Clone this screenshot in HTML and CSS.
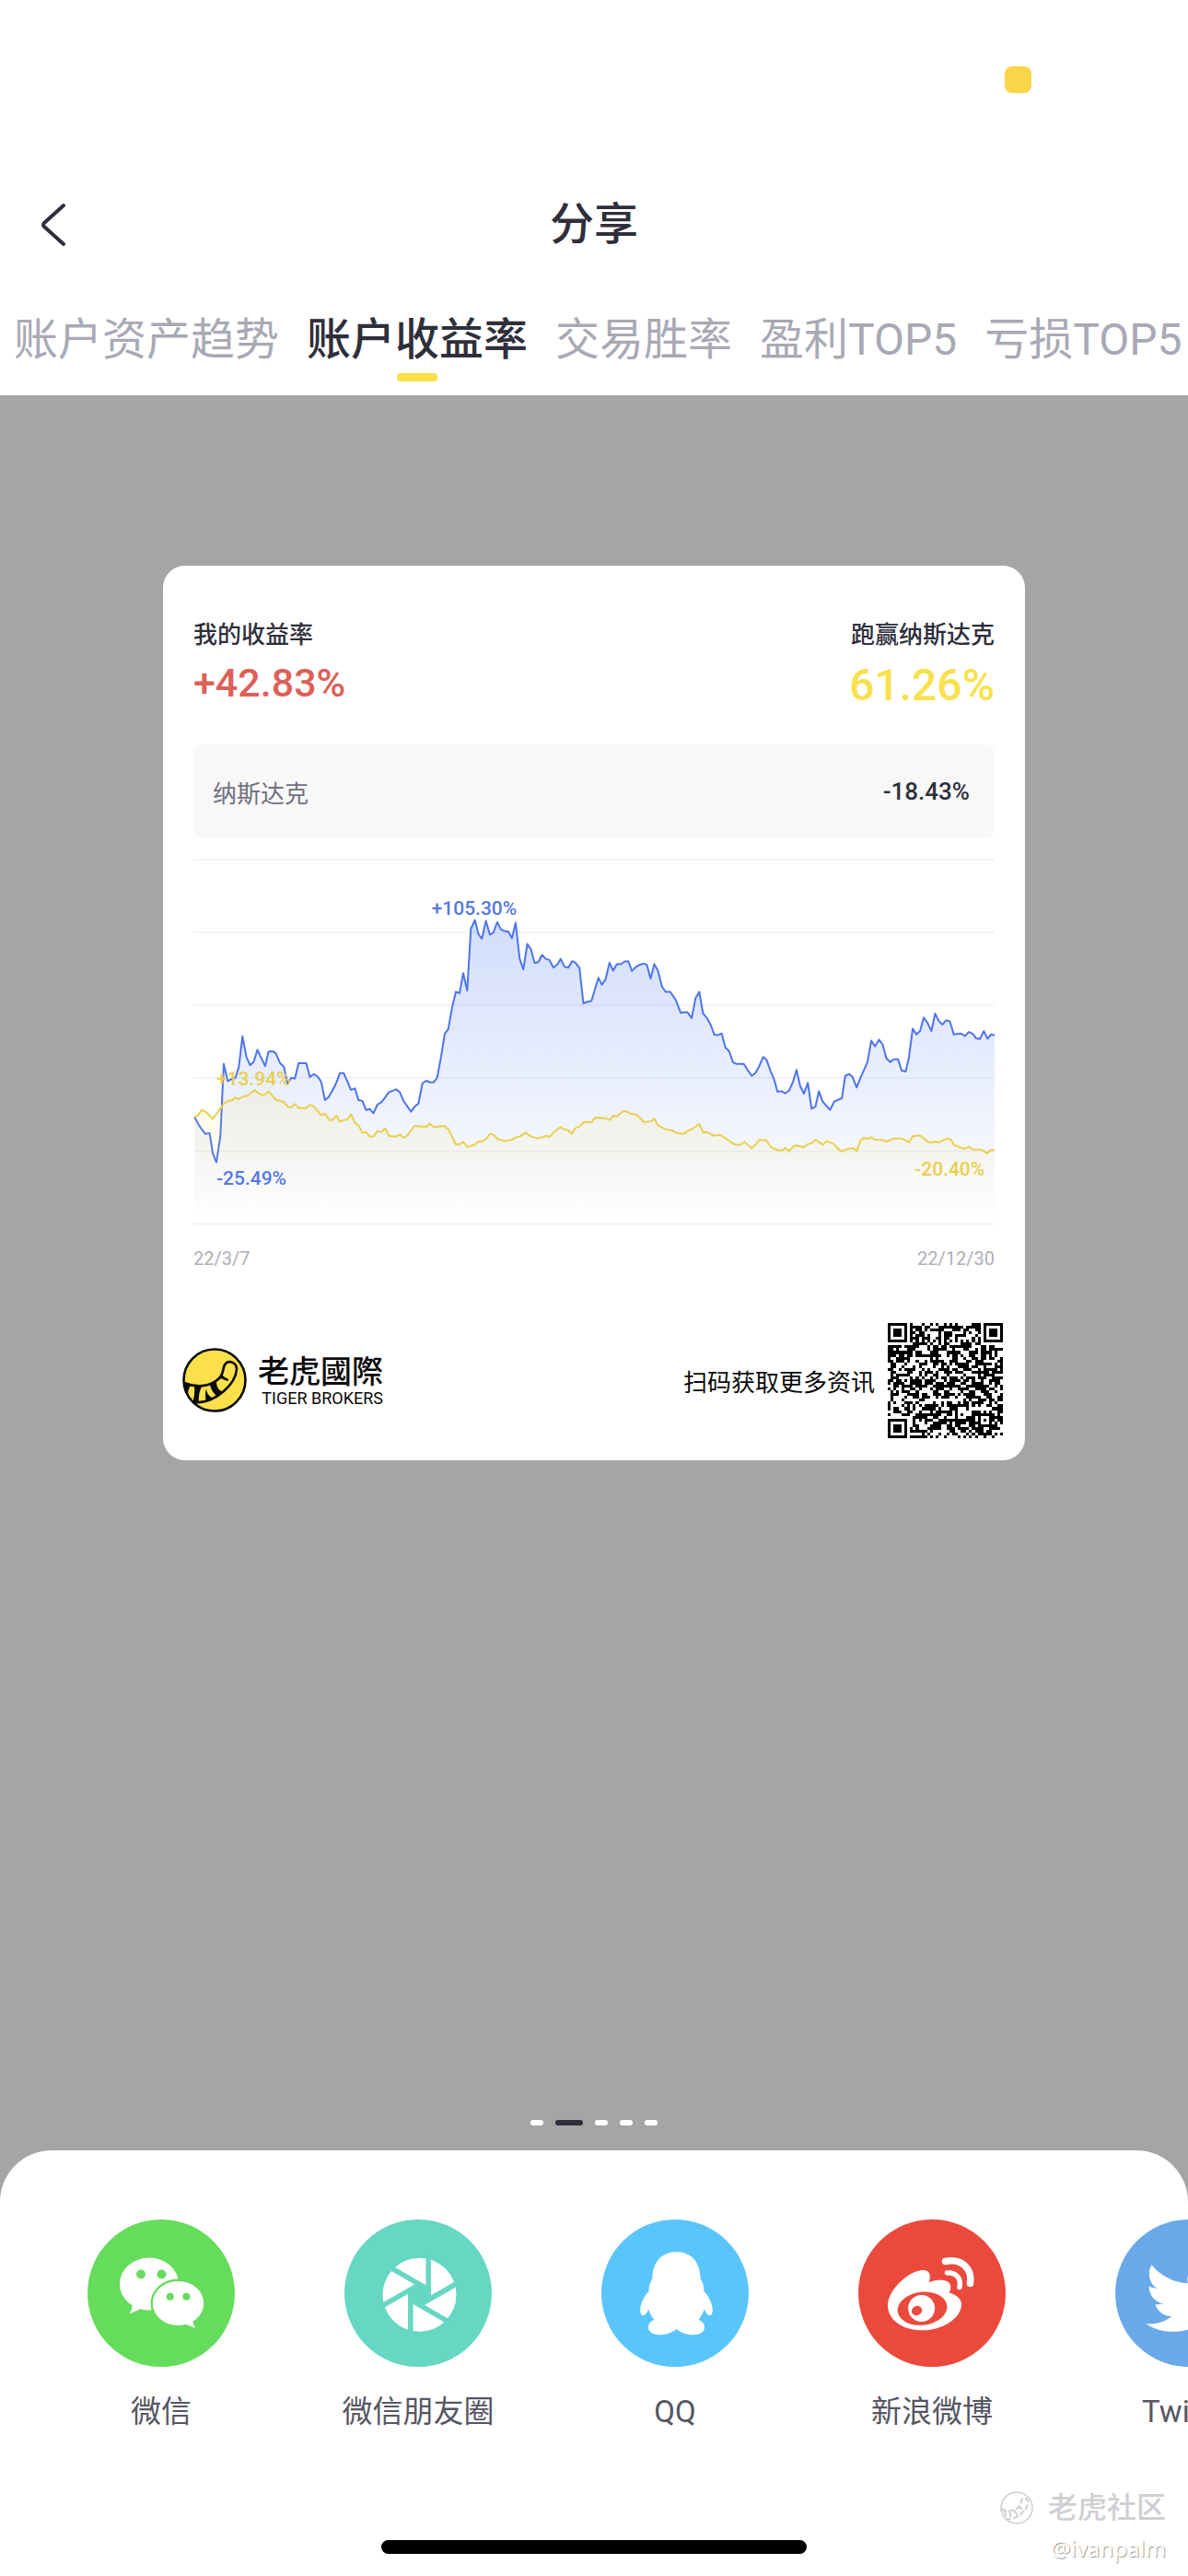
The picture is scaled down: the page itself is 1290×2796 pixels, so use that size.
FILE: index.html
```html
<!DOCTYPE html>
<html lang="zh-CN">
<head>
<meta charset="utf-8">
<meta name="viewport" content="width=device-width, initial-scale=1">
<title>分享</title>
<link rel="stylesheet" href="styles.css">
</head>
<body>
<div class="page">
  <header class="header">
    <div class="status"><span class="status-dot"></span></div>
    <div class="titlebar">
      <button class="back" type="button" aria-label="返回">
        <svg width="30" height="48" viewBox="0 0 30 48"><path d="M26 3 5 22Q3 24 5 26L26 45" fill="none" stroke="#2f2f3b" stroke-width="4" stroke-linecap="round" stroke-linejoin="round"/></svg>
      </button>
      <h1 class="title">分享</h1>
    </div>
    <nav class="tabs">
      <a class="tab" href="#assets">账户资产趋势</a>
      <a class="tab tab-active" href="#returns" aria-current="page">账户收益率</a>
      <a class="tab" href="#winrate">交易胜率</a>
      <a class="tab" href="#profit">盈利TOP5</a>
      <a class="tab" href="#loss">亏损TOP5</a>
    </nav>
  </header>

  <main class="stage">
    <article class="card">
      <div class="summary">
        <div class="metric">
          <span class="metric-label">我的收益率</span>
          <strong class="metric-value gain">+42.83%</strong>
        </div>
        <div class="metric metric-right">
          <span class="metric-label">跑赢纳斯达克</span>
          <strong class="metric-value beat">61.26%</strong>
        </div>
      </div>
      <div class="benchmark">
        <span class="benchmark-name">纳斯达克</span>
        <span class="benchmark-value">-18.43%</span>
      </div>
      <figure class="chart">
        <svg class="plot" viewBox="0 0 871 400" role="img" aria-label="收益率走势">
          <defs>
            <linearGradient id="blueFill" gradientUnits="userSpaceOnUse" x1="0" y1="230" x2="0" y2="1220">
              <stop offset="0" stop-color="#4a76f0" stop-opacity=".25"/>
              <stop offset="1" stop-color="#4a76f0" stop-opacity="0"/>
            </linearGradient>
            <linearGradient id="goldFill" gradientUnits="userSpaceOnUse" x1="0" y1="790" x2="0" y2="1220">
              <stop offset="0" stop-color="#f3dc3e" stop-opacity=".12"/>
              <stop offset="1" stop-color="#f3dc3e" stop-opacity="0"/>
            </linearGradient>
          </defs>
          <g stroke="#f3f4f6" stroke-width="2">
            <path d="M0 3H871M0 82H871M0 161H871M0 240H871M0 320H871M0 399H871"/>
          </g>
          <g transform="scale(.33333) translate(-27 -30)" stroke-linejoin="round">
            <path fill="url(#blueFill)" d="M30 878 45 905 65 933 80 931 90 995 102 1026 115 940 126 705 139 761 152 754 164 751 175 716 187 615 200 683 212 709 223 700 236 659 248 685 261 712 272 665 286 664 296 671 309 702 322 714 334 770 346 750 358 753 370 703 395 703 407 748 420 738 433 747 444 764 456 823 468 813 480 793 492 769 505 735 517 735 529 762 541 790 554 785 565 823 578 826 590 855 602 852 614 866 627 838 640 830 652 815 664 798 688 788 700 797 713 827 737 861 748 845 761 834 774 768 786 760 799 765 811 765 822 750 835 680 847 606 858 592 871 520 883 470 895 475 907 409 920 466 932 265 945 236 957 283 968 297 981 239 994 284 1005 277 1018 243 1030 267 1042 272 1054 274 1066 295 1078 245 1091 362 1103 397 1116 314 1128 332 1140 376 1152 373 1164 350 1177 363 1188 366 1201 391 1213 382 1225 363 1237 388 1250 391 1262 370 1273 375 1286 392 1299 508 1310 503 1325 500 1348 424 1359 447 1371 430 1384 375 1396 401 1408 380 1421 380 1434 371 1446 371 1457 402 1468 391 1482 382 1496 378 1506 382 1518 427 1530 380 1542 401 1555 453 1567 470 1582 470 1601 498 1616 538 1638 536 1652 556 1665 490 1677 470 1689 540 1702 556 1714 578 1726 610 1738 611 1750 606 1762 652 1774 663 1787 700 1799 705 1822 705 1834 724 1848 744 1860 735 1873 711 1885 683 1896 691 1910 730 1921 756 1932 796 1945 794 1957 801 1970 792 1982 765 1994 725 2006 777 2018 802 2031 767 2043 851 2056 844 2067 794 2079 828 2091 841 2103 855 2117 828 2142 817 2153 744 2166 738 2177 748 2190 782 2203 750 2225 700 2238 629 2250 648 2263 626 2275 642 2287 687 2300 699 2311 690 2325 690 2337 727 2350 730 2360 688 2373 590 2385 609 2397 598 2409 554 2421 571 2434 598 2446 541 2458 565 2470 577 2482 563 2494 566 2507 609 2530 606 2543 614 2556 601 2569 607 2580 622 2592 624 2605 598 2617 623 2629 609 2640 612V1220H30Z"/>
            <path fill="none" stroke="#4d74ec" stroke-width="6" d="M30 878 45 905 65 933 80 931 90 995 102 1026 115 940 126 705 139 761 152 754 164 751 175 716 187 615 200 683 212 709 223 700 236 659 248 685 261 712 272 665 286 664 296 671 309 702 322 714 334 770 346 750 358 753 370 703 395 703 407 748 420 738 433 747 444 764 456 823 468 813 480 793 492 769 505 735 517 735 529 762 541 790 554 785 565 823 578 826 590 855 602 852 614 866 627 838 640 830 652 815 664 798 688 788 700 797 713 827 737 861 748 845 761 834 774 768 786 760 799 765 811 765 822 750 835 680 847 606 858 592 871 520 883 470 895 475 907 409 920 466 932 265 945 236 957 283 968 297 981 239 994 284 1005 277 1018 243 1030 267 1042 272 1054 274 1066 295 1078 245 1091 362 1103 397 1116 314 1128 332 1140 376 1152 373 1164 350 1177 363 1188 366 1201 391 1213 382 1225 363 1237 388 1250 391 1262 370 1273 375 1286 392 1299 508 1310 503 1325 500 1348 424 1359 447 1371 430 1384 375 1396 401 1408 380 1421 380 1434 371 1446 371 1457 402 1468 391 1482 382 1496 378 1506 382 1518 427 1530 380 1542 401 1555 453 1567 470 1582 470 1601 498 1616 538 1638 536 1652 556 1665 490 1677 470 1689 540 1702 556 1714 578 1726 610 1738 611 1750 606 1762 652 1774 663 1787 700 1799 705 1822 705 1834 724 1848 744 1860 735 1873 711 1885 683 1896 691 1910 730 1921 756 1932 796 1945 794 1957 801 1970 792 1982 765 1994 725 2006 777 2018 802 2031 767 2043 851 2056 844 2067 794 2079 828 2091 841 2103 855 2117 828 2142 817 2153 744 2166 738 2177 748 2190 782 2203 750 2225 700 2238 629 2250 648 2263 626 2275 642 2287 687 2300 699 2311 690 2325 690 2337 727 2350 730 2360 688 2373 590 2385 609 2397 598 2409 554 2421 571 2434 598 2446 541 2458 565 2470 577 2482 563 2494 566 2507 609 2530 606 2543 614 2556 601 2569 607 2580 622 2592 624 2605 598 2617 623 2629 609 2640 612"/>
            <path fill="url(#goldFill)" d="M30 878 42 873 54 855 68 862 90 884 105 865 125 836 139 825 152 824 164 815 175 820 188 811 200 810 213 801 226 791 248 806 261 805 272 794 296 822 322 829 336 846 347 846 358 836 371 849 395 849 408 838 421 845 444 873 456 867 472 889 482 887 493 873 505 894 517 888 530 886 541 869 554 897 566 906 578 930 590 927 603 942 615 941 627 924 640 927 652 915 665 940 688 942 700 935 713 946 725 938 748 907 786 911 797 900 812 911 845 907 860 920 883 968 895 968 907 959 921 976 945 968 957 958 968 958 982 949 994 933 1006 936 1018 949 1043 957 1066 952 1080 944 1091 942 1110 929 1128 942 1150 948 1177 940 1190 942 1202 928 1224 911 1237 919 1250 922 1261 933 1273 914 1288 908 1300 895 1325 895 1338 880 1370 882 1384 888 1397 874 1408 876 1427 860 1440 860 1452 867 1472 870 1497 895 1520 892 1530 884 1543 906 1567 918 1590 923 1603 930 1626 933 1640 923 1652 919 1677 901 1689 928 1702 928 1724 939 1743 936 1762 947 1787 965 1801 969 1813 968 1824 959 1848 980 1862 967 1873 952 1896 955 1909 974 1923 983 1946 988 1957 979 1970 990 1983 974 1995 971 2018 977 2030 967 2044 963 2056 952 2080 969 2092 957 2115 966 2128 981 2140 990 2165 981 2180 980 2190 990 2202 956 2213 946 2226 949 2238 944 2250 952 2275 953 2288 958 2312 948 2335 948 2361 961 2373 941 2397 938 2421 958 2434 962 2445 958 2458 961 2485 948 2497 952 2508 969 2530 979 2543 982 2556 975 2568 984 2592 984 2604 989 2616 996 2628 986 2640 987V1220H30Z"/>
            <path fill="none" stroke="#e9cf4c" stroke-width="6" d="M30 878 42 873 54 855 68 862 90 884 105 865 125 836 139 825 152 824 164 815 175 820 188 811 200 810 213 801 226 791 248 806 261 805 272 794 296 822 322 829 336 846 347 846 358 836 371 849 395 849 408 838 421 845 444 873 456 867 472 889 482 887 493 873 505 894 517 888 530 886 541 869 554 897 566 906 578 930 590 927 603 942 615 941 627 924 640 927 652 915 665 940 688 942 700 935 713 946 725 938 748 907 786 911 797 900 812 911 845 907 860 920 883 968 895 968 907 959 921 976 945 968 957 958 968 958 982 949 994 933 1006 936 1018 949 1043 957 1066 952 1080 944 1091 942 1110 929 1128 942 1150 948 1177 940 1190 942 1202 928 1224 911 1237 919 1250 922 1261 933 1273 914 1288 908 1300 895 1325 895 1338 880 1370 882 1384 888 1397 874 1408 876 1427 860 1440 860 1452 867 1472 870 1497 895 1520 892 1530 884 1543 906 1567 918 1590 923 1603 930 1626 933 1640 923 1652 919 1677 901 1689 928 1702 928 1724 939 1743 936 1762 947 1787 965 1801 969 1813 968 1824 959 1848 980 1862 967 1873 952 1896 955 1909 974 1923 983 1946 988 1957 979 1970 990 1983 974 1995 971 2018 977 2030 967 2044 963 2056 952 2080 969 2092 957 2115 966 2128 981 2140 990 2165 981 2180 980 2190 990 2202 956 2213 946 2226 949 2238 944 2250 952 2275 953 2288 958 2312 948 2335 948 2361 961 2373 941 2397 938 2421 958 2434 962 2445 958 2458 961 2485 948 2497 952 2508 969 2530 979 2543 982 2556 975 2568 984 2592 984 2604 989 2616 996 2628 986 2640 987"/>
          </g>
          <g class="point-label">
            <text class="blue" x="259" y="63">+105.30%</text>
            <text class="gold" x="25" y="248">+13.94%</text>
            <text class="blue" x="25" y="356">-25.49%</text>
            <text class="gold" x="784" y="346">-20.40%</text>
          </g>
        </svg>
        <figcaption class="dates"><span>22/3/7</span><span>22/12/30</span></figcaption>
      </figure>
      <footer class="card-footer">
        <svg class="logo" viewBox="0 0 70 70" aria-hidden="true">
          <circle cx="35" cy="35" r="33.5" fill="#fae04b"/>
          <path d="M2 38C14 43 30 43 40 33 46 27 43 21 47 17 51 13 59 16 59 23 58 38 38 60 13 59.500" fill="none" stroke="#0a0a0a" stroke-width="2.600"/>
          <path d="M2 37 9 41Q6 45 6 51 2 45 2 37ZM13 41.500 21 42Q17 50 18 59L11 59.500Q14 51 13 41.500ZM26 44Q26 51 33 54.500L26 58Q24 51 26 44ZM30 40.500 37 37Q37 45 44 48L38 53Q32 48 30 40.500ZM40 33 43 29.500Q46 32 50 34L50 36Q46 35 43 33.500Z" fill="#0a0a0a"/>
          <circle cx="35" cy="35" r="33.500" fill="none" stroke="#0a0a0a" stroke-width="2.600"/>
        </svg>
        <div class="brand">
          <span class="brand-cn" lang="zh-TW">老虎國際</span>
          <span class="brand-en">TIGER BROKERS</span>
        </div>
        <span class="scan">扫码获取更多资讯</span>
        <svg class="qr" viewBox="0 0 41 41" shape-rendering="crispEdges" role="img" aria-label="二维码"><path id="qr-modules"/></svg>
      </footer>
    </article>
    <div class="pager"><i></i><i class="current"></i><i></i><i></i><i></i></div>
  </main>

  <section class="sheet">
    <div class="targets">
      <button class="target" type="button">
        <svg class="target-icon" viewBox="0 0 160 160">
          <circle cx="80" cy="80" r="80" fill="#66dc5c"/>
          <g fill="#fff"><ellipse cx="67" cy="70" rx="32" ry="28.500"/><path d="M49 90Q49 97 45.500 102.500L58 97Z"/></g>
          <g fill="#66dc5c"><circle cx="58" cy="59.500" r="5"/><circle cx="80.500" cy="59.500" r="5"/><ellipse cx="98.500" cy="91" rx="30" ry="26.500"/></g>
          <g fill="#fff"><ellipse cx="98.500" cy="91" rx="27.700" ry="24"/><path d="M114 107Q114 113 117 118L105 113Z"/></g>
          <g fill="#66dc5c"><circle cx="89.700" cy="83.700" r="4"/><circle cx="107.400" cy="83.700" r="4"/></g>
        </svg>
        <span>微信</span>
      </button>
      <button class="target" type="button">
        <svg class="target-icon" viewBox="0 0 160 160">
          <circle cx="80" cy="80" r="80" fill="#65d7c2"/>
          <circle cx="81.500" cy="81.700" r="40" fill="#fff"/>
          <path d="M91.200 76.200V87.200L81.500 92.800 71.800 87.200V76.200L81.500 70.600Z" fill="#65d7c2"/>
          <g stroke="#65d7c2" stroke-width="5.500">
            <path d="M91.200 38V88"/>
            <path d="M91.200 38V88" transform="rotate(60 81.500 81.700)"/>
            <path d="M91.200 38V88" transform="rotate(120 81.500 81.700)"/>
            <path d="M91.200 38V88" transform="rotate(180 81.500 81.700)"/>
            <path d="M91.200 38V88" transform="rotate(240 81.500 81.700)"/>
            <path d="M91.200 38V88" transform="rotate(300 81.500 81.700)"/>
          </g>
        </svg>
        <span>微信朋友圈</span>
      </button>
      <button class="target" type="button">
        <svg class="target-icon" viewBox="0 0 160 160">
          <circle cx="80" cy="80" r="80" fill="#5ac5fa"/>
          <path fill="#fff" d="M81.500 35.300C66 35.300 55.500 46 55.500 64Q51.500 70 51.500 78C45 85 41 95 42.500 101 44 107 48 104 51.500 97.500Q53 104 57.500 109C51 111 49 118 53 122 60 128 75 125 81.500 118.700 88 125 103 128 110 122 114 118 112 111 105.500 109Q110 104 111.500 97.500C115 104 119 107 120.500 101 122 95 118 85 111.500 78Q111.500 70 107.500 64C107.500 46 97 35.300 81.500 35.300Z"/>
        </svg>
        <span>QQ</span>
      </button>
      <button class="target" type="button">
        <svg class="target-icon" viewBox="0 0 160 160">
          <circle cx="80" cy="80" r="80" fill="#eb493c"/>
          <path fill="#fff" d="M69.500 55C76 54.500 80 59 76.500 68.500 84 65 96 64 99.500 70 101 74 100 77 98.500 79.500 106 81.500 112 86 112 92 112 107 92 120.300 69.500 120.300 48 120.300 32 109 32 93 32 77 54 56 69.500 55Z"/>
          <ellipse cx="69.500" cy="96.700" rx="27" ry="18" fill="#eb493c" transform="rotate(-7 69.500 96.700)"/>
          <circle cx="68.600" cy="96.500" r="14.500" fill="#fff"/>
          <ellipse cx="63.500" cy="99" rx="5.700" ry="5" fill="#eb493c" transform="rotate(-25 63.500 99)"/>
          <g fill="none" stroke="#fff" stroke-linecap="round"><path d="M94.500 45.500C112 42 124 53 121.500 69.500" stroke-width="7.500"/><path d="M96.500 58C106 57 112 64 110 73.500" stroke-width="5.500"/></g>
        </svg>
        <span>新浪微博</span>
      </button>
      <button class="target" type="button">
        <svg class="target-icon" viewBox="0 0 160 160">
          <circle cx="80" cy="80" r="80" fill="#6aa9e9"/>
          <path transform="translate(33 37) scale(3.900)" fill="#fff" d="M23.953 4.570a10 10 0 0 1-2.825.775 4.958 4.958 0 0 0 2.163-2.723c-.951.555-2.005.959-3.127 1.184a4.920 4.920 0 0 0-8.384 4.482C7.690 8.095 4.067 6.130 1.640 3.162a4.822 4.822 0 0 0-.666 2.475c0 1.710.870 3.213 2.188 4.096a4.904 4.904 0 0 1-2.228-.616v.060a4.923 4.923 0 0 0 3.946 4.827 4.996 4.996 0 0 1-2.212.085 4.936 4.936 0 0 0 4.604 3.417 9.867 9.867 0 0 1-6.102 2.105c-.390 0-.779-.023-1.170-.067a13.995 13.995 0 0 0 7.557 2.209c9.053 0 13.998-7.496 13.998-13.985 0-.210 0-.420-.015-.630A9.935 9.935 0 0 0 24 4.590z"/>
        </svg>
        <span>Twitter</span>
      </button>
    </div>
    <div class="home-indicator"></div>
    <div class="watermark">
      <div class="watermark-brand">
        <svg width="36" height="36" viewBox="0 0 70 70" fill="none" stroke="#cfcfd3" stroke-width="3"><circle cx="35" cy="35" r="33"/><path d="M2 38C14 43 30 43 40 33 46 27 43 21 47 17 51 13 59 16 59 23 58 38 38 60 13 59.500M10 42 13 56M20 43 23 57M30 40 36 51M40 33 47 38" stroke-width="4" stroke-dasharray="12 4"/></svg>
        <span>老虎社区</span>
      </div>
      <span class="watermark-user">@ivanpalm</span>
    </div>
  </section>
</div>
<script src="qr.js"></script>
</body>
</html>
```
FILE: styles.css
```css
* { box-sizing: border-box; }

body {
  margin: 0;
  background: #a5a5a5;
  color: #2f2f3b;
  font-family: Roboto, "Noto Sans CJK SC", sans-serif;
}

button {
  border: 0;
  padding: 0;
  background: none;
  color: inherit;
  font: inherit;
}

svg { display: block; }

.page {
  display: flex;
  flex-direction: column;
  min-height: 100vh;
  overflow: hidden;
}

/* Header */
.header { background: #fff; }

.status {
  display: flex;
  justify-content: flex-end;
  padding: 72px 170px 0;
  height: 200px;
}

.status-dot {
  width: 29px;
  height: 29px;
  border-radius: 8px;
  background: #f9d548;
}

.titlebar {
  display: grid;
  grid-template-columns: 1fr auto 1fr;
  align-items: center;
  height: 88px;
  padding: 0 43px;
}

.title {
  margin: 0;
  font-size: 48px;
  font-weight: 500;
  line-height: 60px;
}

.tabs {
  display: flex;
  gap: 30px;
  padding: 45px 15px 0;
  height: 141px;
  white-space: nowrap;
}

.tab {
  display: flex;
  flex: none;
  flex-direction: column;
  align-items: center;
  color: #a9a9b5;
  font-size: 48px;
  line-height: 72px;
  text-decoration: none;
}

.tab-active {
  color: #2f2f3b;
  font-weight: 500;
}

.tab-active::after {
  content: "";
  width: 44px;
  height: 9px;
  border-radius: 4px;
  background: #fae04b;
}

/* Share card */
.stage {
  display: flex;
  flex: 1;
  flex-direction: column;
  justify-content: space-between;
  padding: 185px 177px 27px;
}

.card {
  padding: 55px 33px 24px;
  border-radius: 24px;
  background: #fff;
}

.summary {
  display: flex;
  justify-content: space-between;
}

.metric {
  display: flex;
  flex-direction: column;
}

.metric-right { align-items: flex-end; }

.metric-label {
  font-size: 26px;
  font-weight: 500;
  line-height: 40px;
}

.metric-value {
  font-weight: 500;
  line-height: 64px;
}

.gain {
  color: #dd6059;
  font-size: 43px;
}

.beat {
  color: #f9e14c;
  font-size: 48px;
  line-height: 70px;
}

.benchmark {
  display: flex;
  align-items: center;
  justify-content: space-between;
  height: 102px;
  margin-top: 29px;
  padding: 0 27px 0 21px;
  border-radius: 10px;
  background: #f8f8f8;
  font-size: 26px;
}

.benchmark-name { color: #70707f; }
.benchmark-value { font-weight: 500; }

.chart { margin: 20px 0 0; }

.plot {
  width: 100%;
  height: auto;
}

.point-label {
  font-size: 21px;
  font-weight: 500;
}

.blue { fill: #5478e4; }
.gold { fill: #e9cf4c; }

.dates {
  display: flex;
  justify-content: space-between;
  margin-top: 22px;
  color: #aeaeb6;
  font-size: 20px;
  line-height: 28px;
}

.card-footer {
  display: flex;
  align-items: center;
  margin: 56px -9px 0 -12px;
  color: #0a0a0a;
}

.logo {
  flex: none;
  width: 70px;
  height: 70px;
}

.brand {
  display: flex;
  flex-direction: column;
  align-items: flex-end;
  margin-left: 12px;
}

.brand-cn {
  font-family: "Noto Sans CJK TC", sans-serif;
  font-size: 34px;
  font-weight: 500;
  line-height: 40px;
}

.brand-en {
  font-size: 18px;
  line-height: 22px;
}

.scan {
  margin-left: auto;
  font-size: 26px;
}

.qr {
  flex: none;
  width: 125px;
  height: 125px;
  margin-left: 14px;
}

.pager {
  display: flex;
  justify-content: center;
  gap: 13px;
}

.pager i {
  width: 14px;
  height: 6px;
  border-radius: 3px;
  background: #fff;
}

.pager .current {
  width: 30px;
  background: #2f2f3b;
}

/* Share sheet */
.sheet {
  position: relative;
  padding: 75px 0 24px;
  border-radius: 56px 56px 0 0;
  background: #fff;
}

.targets {
  display: flex;
  gap: 79px;
  padding-left: 75px;
  overflow: hidden;
}

.target {
  display: flex;
  flex: none;
  flex-direction: column;
  align-items: center;
  gap: 25px;
  width: 200px;
  color: #565663;
  font-size: 33px;
  line-height: 48px;
}

.target-icon {
  width: 160px;
  height: 160px;
}

.home-indicator {
  width: 462px;
  height: 15px;
  margin: 115px auto 0;
  border-radius: 8px;
  background: #000;
}

.watermark {
  position: absolute;
  right: 24px;
  bottom: 10px;
  display: flex;
  flex-direction: column;
  align-items: flex-end;
  color: #cfcfd3;
}

.watermark-brand {
  display: flex;
  align-items: center;
  gap: 16px;
  font-size: 32px;
  font-weight: 500;
  line-height: 48px;
}

.watermark-user {
  color: #fff;
  font-family: "Noto Sans", sans-serif;
  font-size: 24px;
  line-height: 40px;
  text-shadow: 1px 1px 1px #999;
}
```
FILE: qr.js
```js
// Fills the 41x41 code: three finder squares, one alignment square, data modules.
(function () {
  var size = 41;
  var seed = 20221230;
  var d = "";

  function ring(x, y, cx, cy) {
    return Math.max(Math.abs(x - cx), Math.abs(y - cy));
  }

  function next() {
    seed = (seed * 1103515245 + 12345) % 2147483648;
    return seed / 2147483648;
  }

  for (var y = 0; y < size; y++) {
    for (var x = 0; x < size; x++) {
      var dark = next() < 0.55;
      var finder = Math.min(ring(x, y, 3, 3), ring(x, y, 37, 3), ring(x, y, 3, 37));
      var align = ring(x, y, 34, 34);
      if (finder <= 4) {
        dark = finder !== 2 && finder !== 4;
      } else if (align <= 2) {
        dark = align !== 1;
      } else if (x === 6 || y === 6) {
        dark = (x + y) % 2 === 0;
      }
      if (dark) d += "M" + x + " " + y + "h1v1h-1z";
    }
  }
  document.getElementById("qr-modules").setAttribute("d", d);
})();
```
